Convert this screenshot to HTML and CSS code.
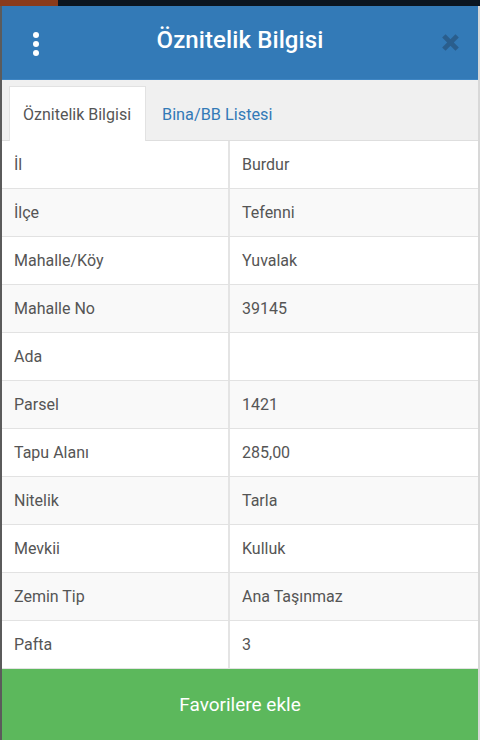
FILE: index.html
```html
<!DOCTYPE html>
<html lang="tr">
<head>
<meta charset="utf-8">
<link rel="stylesheet" href="styles.css">
</head>
<body>
<div class="statusbar"><span class="status-accent"></span></div>
<div class="modal">
  <header class="modal-header">
    <span class="kebab" aria-hidden="true"><i></i><i></i><i></i></span>
    <h1 class="title">Öznitelik Bilgisi</h1>
    <span class="close" aria-label="Kapat">
      <svg viewBox="0 0 20 20" width="19" height="19"><path d="M3 3 L17 17 M17 3 L3 17" stroke="currentColor" stroke-width="5" stroke-linecap="butt"/></svg>
    </span>
  </header>
  <nav class="tabs">
    <span class="tab active">Öznitelik Bilgisi</span>
    <span class="tab second">Bina/BB Listesi</span>
  </nav>
  <div class="table">
    <div class="row"><span class="cell key">İl</span><span class="cell val">Burdur</span></div>
    <div class="row"><span class="cell key">İlçe</span><span class="cell val">Tefenni</span></div>
    <div class="row"><span class="cell key">Mahalle/Köy</span><span class="cell val">Yuvalak</span></div>
    <div class="row"><span class="cell key">Mahalle No</span><span class="cell val">39145</span></div>
    <div class="row"><span class="cell key">Ada</span><span class="cell val"></span></div>
    <div class="row"><span class="cell key">Parsel</span><span class="cell val">1421</span></div>
    <div class="row"><span class="cell key">Tapu Alanı</span><span class="cell val">285,00</span></div>
    <div class="row"><span class="cell key">Nitelik</span><span class="cell val">Tarla</span></div>
    <div class="row"><span class="cell key">Mevkii</span><span class="cell val">Kulluk</span></div>
    <div class="row"><span class="cell key">Zemin Tip</span><span class="cell val">Ana Taşınmaz</span></div>
    <div class="row"><span class="cell key">Pafta</span><span class="cell val">3</span></div>
  </div>
  <button class="fav">Favorilere ekle</button>
</div>
</body>
</html>
```
FILE: styles.css
```css
* { box-sizing: border-box; }
html, body { margin: 0; padding: 0; }
body {
  width: 480px;
  height: 740px;
  overflow: hidden;
  font-family: Roboto, "Liberation Sans", sans-serif;
  background: #0b1520;
}
.statusbar {
  height: 6px;
  background: #0b1520;
  display: flex;
}
.status-accent {
  width: 58px;
  background: #8a3b1c;
}
.modal {
  height: 734px;
  display: flex;
  flex-direction: column;
  border-left: 2px solid #5b5b5b;
  border-right: 2px solid #d8d8d8;
  background: #fff;
}
.modal-header {
  height: 74px;
  background: #337ab7;
  display: flex;
  align-items: center;
  justify-content: center;
  position: relative;
  border-bottom: 1px solid #3f86c4;
}
.kebab {
  position: absolute;
  left: 31px;
  top: 26px;
  display: flex;
  flex-direction: column;
  gap: 3px;
}
.kebab i {
  display: block;
  width: 6px;
  height: 6px;
  border-radius: 50%;
  background: #fff;
}
.title {
  margin: 0;
  color: #fff;
  font-size: 24px;
  font-weight: 500;
  letter-spacing: 0.1px;
  transform: translateY(-3px);
}
.close {
  position: absolute;
  left: 439px;
  top: 27px;
  color: #2a5e8d;
  display: flex;
}
.tabs {
  height: 61px;
  background: #f0f0f0;
  display: flex;
  align-items: flex-end;
  padding-left: 7px;
  border-bottom: 1px solid #dedede;
}
.tab {
  height: 55px;
  display: flex;
  align-items: center;
  padding: 0 13px 0 13px;
  font-size: 16px;
  color: #337ab7;
  margin-bottom: -1px;
  border: 1px solid transparent;
  border-bottom: none;
}
.tab.second {
  padding-left: 15px;
  font-size: 16.3px;
}
.tab.active {
  background: #fff;
  color: #555;
  border-color: #e2e2e2;
  width: 137px;
  padding-left: 13px;
}
.table {
  display: flex;
  flex-direction: column;
}
.row {
  height: 48px;
  display: grid;
  grid-template-columns: 226px 1fr;
  border-bottom: 1px solid #e2e2e2;
}
.row:nth-child(even) { background: #f9f9f9; }
.cell {
  display: flex;
  align-items: center;
  padding-left: 12px;
  font-size: 16px;
  color: #555;
}
.cell.val {
  border-left: 2px solid #e4e4e4;
  padding-left: 12px;
}
.fav {
  flex: 1;
  border: none;
  margin: 0;
  background: #5cb85c;
  color: #fff;
  font-family: inherit;
  font-size: 19px;
  padding-bottom: 2px;
}
```
